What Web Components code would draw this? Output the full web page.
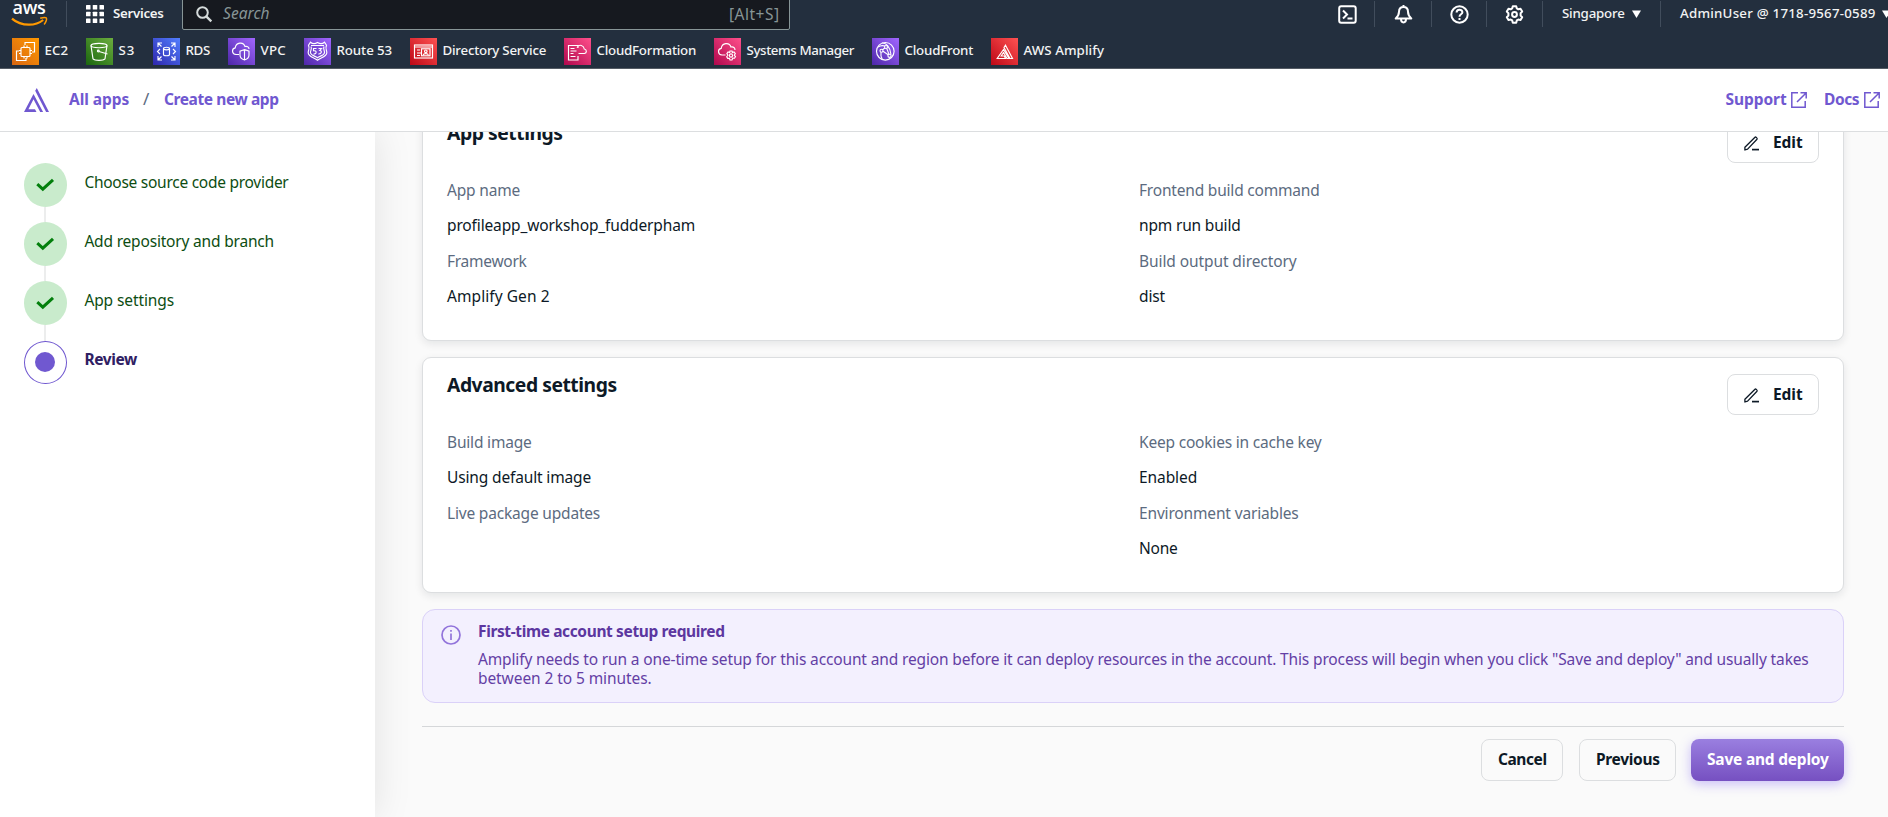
<!DOCTYPE html>
<html lang="en">
<head>
<meta charset="utf-8">
<title>Create new app - AWS Amplify</title>
<style>
html,body{margin:0;height:100%;overflow:hidden}
body{font-family:"Noto Sans","Open Sans",sans-serif;background:#fafafa;color:#0d1926}
</style>
</head>
<body>
<amplify-page></amplify-page>
<script>
const define = (name, html, setup) => {
  const tpl = document.createElement('template');
  tpl.innerHTML = html;
  customElements.define(name, class extends HTMLElement {
    constructor() {
      super();
      this.attachShadow({ mode: 'open' }).append(tpl.content.cloneNode(true));
    }
    connectedCallback() { if (setup) setup(this, this.shadowRoot); }
  });
};

/* A single line of text, tracked so that it fills the width given in "w". */
define('fit-text', `<style>
:host{display:block;white-space:nowrap;flex:none}
span{display:inline-block}
</style><span><slot></slot></span>`, (el, root) => {
  const size = el.getAttribute('size'), weight = el.getAttribute('weight'), w = +el.getAttribute('w');
  if (size) el.style.fontSize = size + 'px';
  if (weight) el.style.fontWeight = weight;
  el.style.width = w + 'px';
  const natural = root.querySelector('span').getBoundingClientRect().width;
  el.style.letterSpacing = ((w + .6 - natural) / el.textContent.length).toFixed(3) + 'px';
});

const ICONS = {
  aws: `<svg width="36" height="23" viewBox="0 0 36 23" fill="none"><path d="M0 15.6C4.5 19.6 10.8 21.7 17 21.7c5 0 10.400-1.700 14.200-4.700" stroke="#ff9900" stroke-width="2.200"/><path d="M28.200 15.300c2.300-.7 5.600-.9 6.200-.2.6.8-.3 4.400-2.300 6.400" stroke="#ff9900" stroke-width="1.500"/></svg>`,
  grid: `<svg width="18" height="18" fill="#fff"><rect width="4.500" height="4.500" rx=".6"/><rect x="6.750" width="4.500" height="4.500" rx=".6"/><rect x="13.500" width="4.500" height="4.500" rx=".6"/><rect y="6.750" width="4.500" height="4.500" rx=".6"/><rect x="6.750" y="6.750" width="4.500" height="4.500" rx=".6"/><rect x="13.500" y="6.750" width="4.500" height="4.500" rx=".6"/><rect y="13.500" width="4.500" height="4.500" rx=".6"/><rect x="6.750" y="13.500" width="4.500" height="4.500" rx=".6"/><rect x="13.500" y="13.500" width="4.500" height="4.500" rx=".6"/></svg>`,
  search: `<svg width="16" height="16" fill="none" stroke="#d5dbdb" stroke-width="2"><circle cx="6.500" cy="6.500" r="5.300"/><path d="M10.300 10.300l5 5" stroke-width="2.400"/></svg>`,
  shell: `<svg width="19" height="19" fill="none" stroke="#fff" stroke-width="2"><rect x="1.200" y="1.200" width="16.500" height="16.500" rx="2"/><path d="M5 5.500l4 4-4 4M9.500 13.500h5"/></svg>`,
  bell: `<svg width="19" height="19" fill="none" stroke="#fff" stroke-width="2" stroke-linejoin="round"><path d="M9.500 2C6.300 2 5 4.200 5 6.800c0 3-.8 4.600-3.300 6.700h15.600C14.800 11.400 14 9.800 14 6.800 14 4.200 12.700 2 9.500 2zM9.500 0v2M7 14c0 4.500 5 4.500 5 0"/></svg>`,
  help: `<svg width="19" height="19" fill="none" stroke="#fff" stroke-width="2"><circle cx="9.500" cy="9.500" r="8.200"/><path d="M6.600 7.500c0-3.700 5.800-3.600 5.800-.3 0 2.100-2.900 2-2.900 4.500M9.500 13v2"/></svg>`,
  gear: `<svg width="19" height="19" viewBox="0 0 19 19" fill="none" stroke="#fff" stroke-width="2" stroke-linejoin="round"><path d="M7.800 1.200h3.400l.6 2.200 1.500.9 2.200-.6 1.700 2.900-1.600 1.600v2.400l1.600 1.600-1.700 2.900-2.200-.6-1.500.9-.6 2.400H7.800l-.6-2.400-1.500-.9-2.200.6-1.700-2.900 1.600-1.600V8.200L1.800 6.600l1.700-2.900 2.200.6 1.500-.9z"/><circle cx="9.500" cy="9.500" r="2.400"/></svg>`,
  caret: `<svg width="9" height="8" fill="#fff"><path d="M0 .5h9L4.500 8z"/></svg>`,
  amplify: `<svg width="25" height="24" fill="#7058d0"><path d="M12.800 0L25 24h-2.900L11.200 2.700zM9.500 6L19.100 24h-2.900L9.500 11.300 4.400 21.200H11l1.500 2.800H0z"/></svg>`,
  external: `<svg width="16" height="16" fill="none" stroke="#7058d0" stroke-width="1.500"><path d="M7 .8H.8v14.400h13.400V9M9.500.8h5.700v5.700M14.800 1.200L6 10"/></svg>`,
  check: `<svg width="19" height="14" fill="none" stroke="#037f0c" stroke-width="3"><path d="M1.300 6.200l5.500 5L17 1.800"/></svg>`,
  pencil: `<svg width="15" height="15" fill="none" stroke="#0d1926" stroke-width="1.300" stroke-linejoin="round"><path d="M.9 14V11.200L11 1.200c.7-.7 2.700 1.200 2 2L3.600 13.100z"/><path d="M8 13.600h7" stroke-width="1.700"/></svg>`,
  info: `<svg width="20" height="20" fill="none" stroke="#9274db" stroke-width="1.700"><circle cx="10" cy="10" r="9"/><path d="M10 8.500V15M10 5v1.800"/></svg>`,
  ec2: `<rect x="9" y="9.500" width="9" height="9" rx="1"/><path d="M12 7.500v2M15 7.500v2M12 18.500v2M15 18.500v2M7 12.500h2M7 15.500h2M18 12.500h2M18 15.500h2M13 7V4.500h9.500V14H20M7 13H4.500v9.500H14V20"/>`,
  s3: `<ellipse cx="13" cy="7.500" rx="8" ry="2.200"/><path d="M5 7.500l2 13.300c2 2 10 2 12 0l2-13.300M13 13.500l8.500 2.500"/><circle cx="12.300" cy="13" r=".9"/>`,
  rds: `<path d="M5 9V5h4M5 5l3.500 3.500M18 5h4v4M22 5l-3.500 3.500M5 18v4h4M5 22l3.500-3.500M22 18v4h-4M22 22l-3.500-3.500M7 11l-2.500 2.500L7 16M20 11l2.500 2.500L20 16M10.500 10.500v6c0 1.700 6 1.700 6 0v-6"/><ellipse cx="13.500" cy="10.500" rx="3" ry="1.300"/>`,
  vpc: `<path d="M11 16.500H8c-4.500-.5-4.500-6-.8-6.600C8 4 15.500 3.500 17 8.500c2.500-.6 4 .8 4 2.500M16.500 11.500l4.500 1.600v3.900c0 2.400-2 4.200-4.500 5-2.500-.8-4.500-2.600-4.500-5v-3.900zM16.500 11.500V22"/>`,
  route: `<path d="M13.500 4.500c2.500 1.500 5.500 1 7-.3l2 3c-1.500 3 .3 5 .3 7.500 0 4-6.300 5-9.300 7.500-3-2.500-9.300-3.500-9.300-7.500 0-2.500 1.800-4.500.3-7.500l2-3c1.500 1.300 4.500 1.800 7 .3z"/><path d="M7 7.500h13M7 8.500c1.200 2.500-.8 4.300-.5 6.300.3 2.700 5 3.200 7 5 2-1.800 6.700-2.300 7-5 .3-2-1.700-3.800-.5-6.300M12.500 10.500h-3v2.300c3.500-.6 3.500 3.500 0 3.200M14.500 10.500H17.500l-1.700 2c2.500.2 2 3.800-1.500 3.500"/>`,
  directory: `<rect x="4.500" y="7" width="18" height="13"/><path d="M4.500 9h18M7 12h3M7 15h4M7 17.500h3"/><rect x="11.500" y="10.800" width="8.500" height="7"/><circle cx="15.800" cy="13.300" r="1.300"/><path d="M13 17.500c.5-2.500 5-2.500 5.500 0"/>`,
  formation: `<path d="M14 18v4H4.500V7.500H14V10M6.500 10.500h4M6.500 13h6M6.500 15.500h3M6.500 18.500h5M14.500 15.500h6c2.500-.4 2.500-4-.2-4.500-.5-3.500-5-5.500-7.300-1.500"/>`,
  systems: `<path d="M11.500 17H8c-4.500-.5-4.500-6-.8-6.600C8 4.500 15.500 4 17 9c2.500-.6 4 .8 4 3"/><circle cx="17" cy="17.500" r="1.600"/><path d="M16 13h2l.4 1.500 1.600-.5 1.300 1.600-1 1.600 1.200 1.300-1 1.700-1.700-.1L18 22h-2l-.6-1.700-1.700.1-1-1.700 1.200-1.400-1-1.700 1.200-1.600 1.600.5z"/>`,
  front: `<circle cx="13.300" cy="13.300" r="8.800"/><circle cx="14" cy="9" r="1.500"/><circle cx="9.500" cy="12.700" r="1.500"/><circle cx="17.500" cy="17.800" r="1.600"/><path d="M14.700 10.400l2.300 6M11 13.300l5.200 3.500M12.800 10L10.500 11.700M9 14.200c-.4 2.500 0 4.800 1.200 6.800M12.800 8C10 7 7.500 8 6 9M10 5c4-.2 8 3.500 9 11.500"/>`,
  amp: `<path d="M14.500 7.200L21.500 20.500H19L13 9.500zM12.500 11.500L6.200 20.500H14.500L13.300 18H10.200L12.500 14.500 16 20.500H18z"/>`
};

define('ui-icon', `<style>:host{display:block;flex:none;line-height:0}svg{display:block;overflow:visible}</style>`, (el, root) => {
  root.innerHTML += ICONS[el.getAttribute('name')];
});

define('aws-logo', `<style>
:host{display:block;flex:none;width:35px;height:24px;position:relative;color:#fff}
b{position:absolute;left:.5px;top:-1px;font:600 18px/13px "Open Sans",sans-serif;letter-spacing:-.3px}
ui-icon{position:absolute;left:0;top:1px}
</style><b>aws</b><ui-icon name="aws"></ui-icon>`);

define('service-link', `<style>
:host{display:flex;align-items:center;gap:5.500px;margin-right:.5px;flex:none;color:#f2f3f3}
i{display:block;width:27px;height:27px}
svg{display:block;fill:none;stroke:#fff;stroke-width:1.150}
.txt{line-height:20px;margin-top:-3px}
</style><i><svg width="27" height="27"></svg></i><div class="txt"><slot></slot></div>`, (el, root) => {
  const palette = {
    orange: ['#d86613', '#ff9900'], green: ['#1b660f', '#6cae3e'], blue: ['#2e27ad', '#527fff'],
    violet: ['#4d27a8', '#a166ff'], red: ['#bd0816', '#ff5252'], pink: ['#b0084d', '#ff4f8b']
  };
  const [a, b] = palette[el.getAttribute('tone')];
  root.querySelector('i').style.background = `linear-gradient(45deg,${a},${b})`;
  root.querySelector('svg').innerHTML = ICONS[el.getAttribute('icon')];
});

define('console-nav', `<style>
:host{display:block;height:68px;background:#232f3e;border-bottom:1px solid #545b64;color:#f2f3f3;overflow:hidden}
.top{display:flex;align-items:center;height:28px;padding-left:12px}
.fav{display:flex;align-items:center;gap:18px;height:33px;padding:7px 0 0 12px}
hr{flex:none;width:1px;height:26px;border:0;margin:0;background:#414d5c}
.up{margin-top:-3px;line-height:20px}
.search{display:flex;align-items:center;box-sizing:border-box;flex:none;width:608px;height:32px;margin:0 548px 0 18px;padding:0 10px 0 13px;
 background:#16191f;border:1px solid #879596;border-radius:2px;color:#879596}
.search em{margin:-2px auto 0 11px}
.search .key{margin-top:-1px}
</style>
<div class="top">
<aws-logo></aws-logo><hr style="margin:0 19px">
<ui-icon name="grid"></ui-icon><fit-text w="50" size="13.300" weight="600" style="margin:-2px 0 0 9px;line-height:20px">Services</fit-text>
<div class="search" style="margin-left:19px"><ui-icon name="search"></ui-icon><em><fit-text w="46" size="15.500">Search</fit-text></em><fit-text class="key" w="50" size="15.500">[Alt+S]</fit-text></div>
<ui-icon name="shell"></ui-icon><hr style="margin:0 19px 0 17px">
<ui-icon name="bell"></ui-icon><hr style="margin:0 18px">
<ui-icon name="help"></ui-icon><hr style="margin:0 18px 0 17px">
<ui-icon name="gear"></ui-icon><hr style="margin:0 19px 0 18px">
<fit-text class="up" w="62" size="13.300" weight="500">Singapore</fit-text><ui-icon name="caret" style="margin-left:8px"></ui-icon><hr style="margin:0 19px">
<fit-text class="up" w="195" size="13.300" weight="500">AdminUser @ 1718-9567-0589</fit-text><ui-icon name="caret" style="margin-left:7px"></ui-icon>
</div>
<div class="fav">
<service-link icon="ec2" tone="orange"><fit-text w="23" size="13.300" weight="500">EC2</fit-text></service-link>
<service-link icon="s3" tone="green"><fit-text w="16" size="13.300" weight="500">S3</fit-text></service-link>
<service-link icon="rds" tone="blue"><fit-text w="24" size="13.300" weight="500">RDS</fit-text></service-link>
<service-link icon="vpc" tone="violet"><fit-text w="25" size="13.300" weight="500">VPC</fit-text></service-link>
<service-link icon="route" tone="violet"><fit-text w="55" size="13.300" weight="500">Route 53</fit-text></service-link>
<service-link icon="directory" tone="red"><fit-text w="103" size="13.300" weight="500">Directory Service</fit-text></service-link>
<service-link icon="formation" tone="pink"><fit-text w="99" size="13.300" weight="500">CloudFormation</fit-text></service-link>
<service-link icon="systems" tone="pink"><fit-text w="107" size="13.300" weight="500">Systems Manager</fit-text></service-link>
<service-link icon="front" tone="violet"><fit-text w="68" size="13.300" weight="500">CloudFront</fit-text></service-link>
<service-link icon="amp" tone="red"><fit-text w="80" size="13.300" weight="500">AWS Amplify</fit-text></service-link>
</div>`);

define('crumb-bar', `<style>
:host{display:flex;align-items:center;box-sizing:border-box;height:63px;padding:0 8px 0 24px;background:#fff;border-bottom:1px solid #dcdee0;color:#7058d0}
fit-text{line-height:24px;margin-top:-2px}
</style>
<ui-icon name="amplify"></ui-icon>
<fit-text w="59.500" size="15.500" weight="700" style="margin-left:20px">All apps</fit-text>
<fit-text w="7" size="17" style="margin-left:14.500px;color:#5c6b80">/</fit-text>
<fit-text w="114" size="15.500" weight="700" style="margin-left:14px">Create new app</fit-text>
<fit-text w="60.500" size="15.500" weight="700" style="margin-left:auto">Support</fit-text><ui-icon name="external" style="margin:0 17px 0 5px"></ui-icon>
<fit-text w="34.500" size="15.500" weight="700">Docs</fit-text><ui-icon name="external" style="margin-left:5.500px"></ui-icon>`);

define('step-item', `<style>
:host{display:grid;grid-template-columns:43px 1fr;column-gap:17.400px;height:59.200px;color:#0d4d12}
.rail{display:flex;flex-direction:column;align-items:center}
.dot{display:flex;align-items:center;justify-content:center;box-sizing:border-box;width:43px;height:43.500px;border-radius:50%;background:#c9ebcc}
.line{flex:1;width:2px;margin-right:1px;background:#eceded}
.label{line-height:24px;padding-top:6.500px}
:host([current]) .dot{background:#fff;border:1px solid #7058d0}
:host([current]) .dot::after{content:"";width:20px;height:20px;margin-right:1px;border-radius:50%;background:#7058d0}
:host([current]) ui-icon,:host([current]) .line{display:none}
:host([current]){color:#2f2063}
</style>
<div class="rail"><div class="dot"><ui-icon name="check"></ui-icon></div><div class="line"></div></div><div class="label"><slot></slot></div>`);

define('step-nav', `<style>
:host{display:block;box-sizing:border-box;width:375px;padding:31px 24px;background:#fff;box-shadow:0 0 36px rgba(0,0,0,.1);clip-path:inset(0 -60px 0 0);z-index:1}
</style>
<step-item><fit-text w="203.500" size="15.500">Choose source code provider</fit-text></step-item>
<step-item><fit-text w="189" size="15.500">Add repository and branch</fit-text></step-item>
<step-item><fit-text w="89" size="15.500">App settings</fit-text></step-item>
<step-item current><fit-text w="52" size="15.500" weight="700">Review</fit-text></step-item>`);

define('ui-button', `<style>
:host{display:flex;align-items:center;justify-content:center;box-sizing:border-box;flex:none;height:42px;padding:0 16px;border:1px solid #dcdee0;border-radius:8px;line-height:24px;color:#0d1926;font-weight:700;font-size:15.500px}
div{display:flex;align-items:center;margin-top:-1px}
:host([primary]){border:0;background:linear-gradient(#9a7fe0,#7650c1);color:#fff;box-shadow:0 3px 12px rgba(112,80,240,.36)}
</style><div><slot></slot></div>`);

define('field-pair', `<style>
:host{display:block;font-size:15.500px;line-height:35.300px;height:70.700px}
.k{color:#5c6b80}
</style><div class="k"><slot name="k"></slot></div><div><slot></slot></div>`);

define('review-card', `<style>
:host{display:block;box-sizing:border-box;height:236px;background:#fff;border:1px solid #dcdee0;border-radius:9px;box-shadow:0 3px 9px rgba(13,25,38,.09);padding:16px 24px 0}
header{display:flex;justify-content:space-between;height:51px}
.t{line-height:24px;margin-top:-1.500px}
.grid{display:grid;grid-template-columns:692px 1fr}
</style>
<header><div class="t"><slot name="title"></slot></div>
<ui-button style="width:92px;height:41px"><ui-icon name="pencil" style="margin:2px 14px 0 0"></ui-icon><fit-text w="29">Edit</fit-text></ui-button></header>
<div class="grid"><slot></slot></div>`);

define('info-alert', `<style>
:host{display:flex;box-sizing:border-box;height:93.500px;padding:14.500px 18px;background:#f3f0fe;border:1px solid #dad1f8;border-radius:13px;color:#643fa5;gap:17px}
h4{margin:-6px 0 7.500px;font-size:15.500px;line-height:24px;color:#5c37a0}
p{margin:0;font-size:15.500px;line-height:19px}
</style><ui-icon name="info"></ui-icon><div><h4><slot name="title"></slot></h4><p><slot></slot></p></div>`);

define('review-main', `<style>
:host{display:block;padding:0 44px 0 47px;overflow:hidden}
.col{display:flex;flex-direction:column;gap:16px;margin-top:-27px}
.foot{display:flex;justify-content:flex-end;border-top:1px solid #d5d7d9;padding-top:12px;margin-top:7px}
</style>
<div class="col">
<review-card><fit-text slot="title" w="115" size="19.300" weight="700">App settings</fit-text>
<field-pair><fit-text slot="k" w="72.500">App name</fit-text><fit-text w="247.500">profileapp_workshop_fudderpham</fit-text></field-pair>
<field-pair><fit-text slot="k" w="180">Frontend build command</fit-text><fit-text w="101">npm run build</fit-text></field-pair>
<field-pair><fit-text slot="k" w="79">Framework</fit-text><fit-text w="102">Amplify Gen 2</fit-text></field-pair>
<field-pair><fit-text slot="k" w="157">Build output directory</fit-text><fit-text w="25.500">dist</fit-text></field-pair>
</review-card>
<review-card><fit-text slot="title" w="169" size="19.300" weight="700">Advanced settings</fit-text>
<field-pair><fit-text slot="k" w="84">Build image</fit-text><fit-text w="143.500">Using default image</fit-text></field-pair>
<field-pair><fit-text slot="k" w="182">Keep cookies in cache key</fit-text><fit-text w="57.500">Enabled</fit-text></field-pair>
<field-pair><fit-text slot="k" w="152.500">Live package updates</fit-text></field-pair>
<field-pair><fit-text slot="k" w="159">Environment variables</fit-text><fit-text w="38">None</fit-text></field-pair>
</review-card>
<info-alert><fit-text slot="title" w="246" weight="700">First-time account setup required</fit-text>
<fit-text w="1330">Amplify needs to run a one-time setup for this account and region before it can deploy resources in the account. This process will begin when you click "Save and deploy" and usually takes</fit-text>
<fit-text w="173">between 2 to 5 minutes.</fit-text></info-alert>
<div class="foot">
<ui-button style="width:82px;margin-right:16px"><fit-text w="48">Cancel</fit-text></ui-button>
<ui-button style="width:97px;margin-right:15px"><fit-text w="63">Previous</fit-text></ui-button>
<ui-button primary style="width:153px"><fit-text w="121">Save and deploy</fit-text></ui-button>
</div>
</div>`);

define('amplify-page', `<style>
:host{display:grid;grid-template:69px 63px 1fr/375px 1fr;height:100vh;overflow:hidden}
console-nav,crumb-bar{grid-column:1/-1;min-width:0}
crumb-bar{position:relative;z-index:2}
review-main{min-width:0}
</style>
<console-nav></console-nav><crumb-bar></crumb-bar><step-nav></step-nav><review-main></review-main>`);
</script>
</body>
</html>
